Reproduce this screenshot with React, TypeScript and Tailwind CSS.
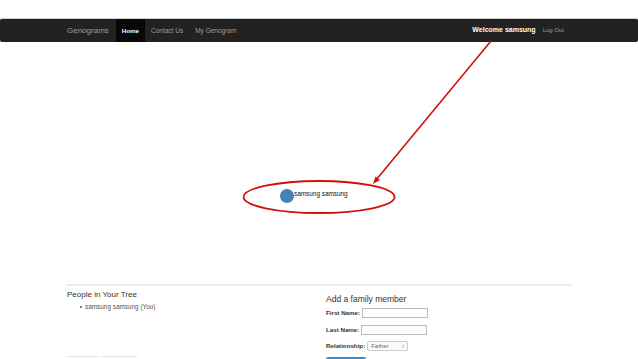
const navLinks = ["Contact Us", "My Genogram"]

export default function App() {
  return (
    <div className="relative h-[359px] w-[638px] overflow-hidden bg-white font-['Liberation_Sans',Arial,sans-serif] text-[#333]">
      {/* navbar */}
      <nav className="mt-[18px] h-[24px] rounded-[2px] border-t border-[#cfcfcf] bg-[#222]">
        <div className="mx-auto flex h-full w-[506px] items-stretch">
          <div className="flex items-center pl-[1px] pr-[7px] text-[8px] text-[#9d9d9d]">Genograms</div>
          <div className="flex items-center bg-[#080808] px-[6px] text-[6.2px] font-bold text-white">Home</div>
          {navLinks.map((l) => (
            <div key={l} className="flex items-center px-[6px] text-[6.5px] text-[#9d9d9d]">
              {l}
            </div>
          ))}
          <div className="ml-auto flex items-center gap-[7px] pr-[8px]">
            <span className="text-[7px] font-bold text-white">Welcome samsung</span>
            <span className="text-[6px] text-[#9d9d9d]">Log Out</span>
          </div>
        </div>
      </nav>

      {/* genogram canvas */}
      <div className="relative h-[242px]">
        <div className="absolute left-[280px] top-[147px] h-[14px] w-[14px] rounded-full bg-[#4682b4]" />
        <div className="absolute left-[294px] top-[148px] text-[6.4px] leading-[8px] text-[#111]">samsung samsung</div>
      </div>

      {/* bottom */}
      <div className="mx-auto w-[506px]">
        <div className="h-[2px] bg-[#ececec]" />
        <div className="grid grid-cols-[260px_1fr]">
          <div className="pl-[1px]">
            <h3 className="mt-[4px] text-[8px] leading-[10px] text-[#333]">People in Your Tree</h3>
            <ul className="mt-[3px] pl-[13px] text-[6.4px] leading-[8px] text-[#555]">
              <li className="flex items-center gap-[3px]">
                <span className="h-[2px] w-[2px] rounded-full bg-[#555]" />
                samsung samsung (You)
              </li>
            </ul>
            <div className="mt-[45px] flex gap-[2px]">
              <div className="h-[4px] w-[33px] rounded-t-[2px] border-t border-[#e4e4e4]" />
              <div className="h-[4px] w-[36px] rounded-t-[2px] border-t border-[#e4e4e4]" />
            </div>
          </div>
          <div>
            <h3 className="mt-[8px] text-[8.5px] leading-[10px] text-[#333]">Add a family member</h3>
            <div className="mt-[4px] flex h-[10px] items-center gap-[2px]">
              <span className="text-[6.2px] font-bold">First Name:</span>
              <span className="h-[10px] w-[66px] border border-[#bbb] bg-white" />
            </div>
            <div className="mt-[7px] flex h-[10px] items-center gap-[2px]">
              <span className="text-[6.2px] font-bold">Last Name:</span>
              <span className="h-[10px] w-[66px] border border-[#bbb] bg-white" />
            </div>
            <div className="mt-[5px] flex h-[12px] items-center gap-[2px]">
              <span className="text-[6.2px] font-bold">Relationship:</span>
              <span className="flex h-[10px] w-[41px] items-center justify-between rounded-[2px] border border-[#ccc] bg-[#fafafa] px-[3px] text-[6px] text-[#666]">
                Father
                <span className="text-[5px] leading-none">↕</span>
              </span>
            </div>
            <div className="mt-[5px] h-[12px] w-[40px] rounded-[2px] bg-[#428bca]" />
          </div>
        </div>
      </div>

      {/* annotation */}
      <svg className="pointer-events-none absolute inset-0" width="638" height="359" viewBox="0 0 638 359">
        <line x1="491" y1="41" x2="376" y2="180" stroke="#d10f0f" strokeWidth="1.6" />
        <polygon points="373,184 380,180 375.5,176.5" fill="#d10f0f" />
        <ellipse cx="319" cy="197" rx="75.5" ry="16" fill="none" stroke="#d10f0f" strokeWidth="1.8" />
      </svg>
    </div>
  )
}
